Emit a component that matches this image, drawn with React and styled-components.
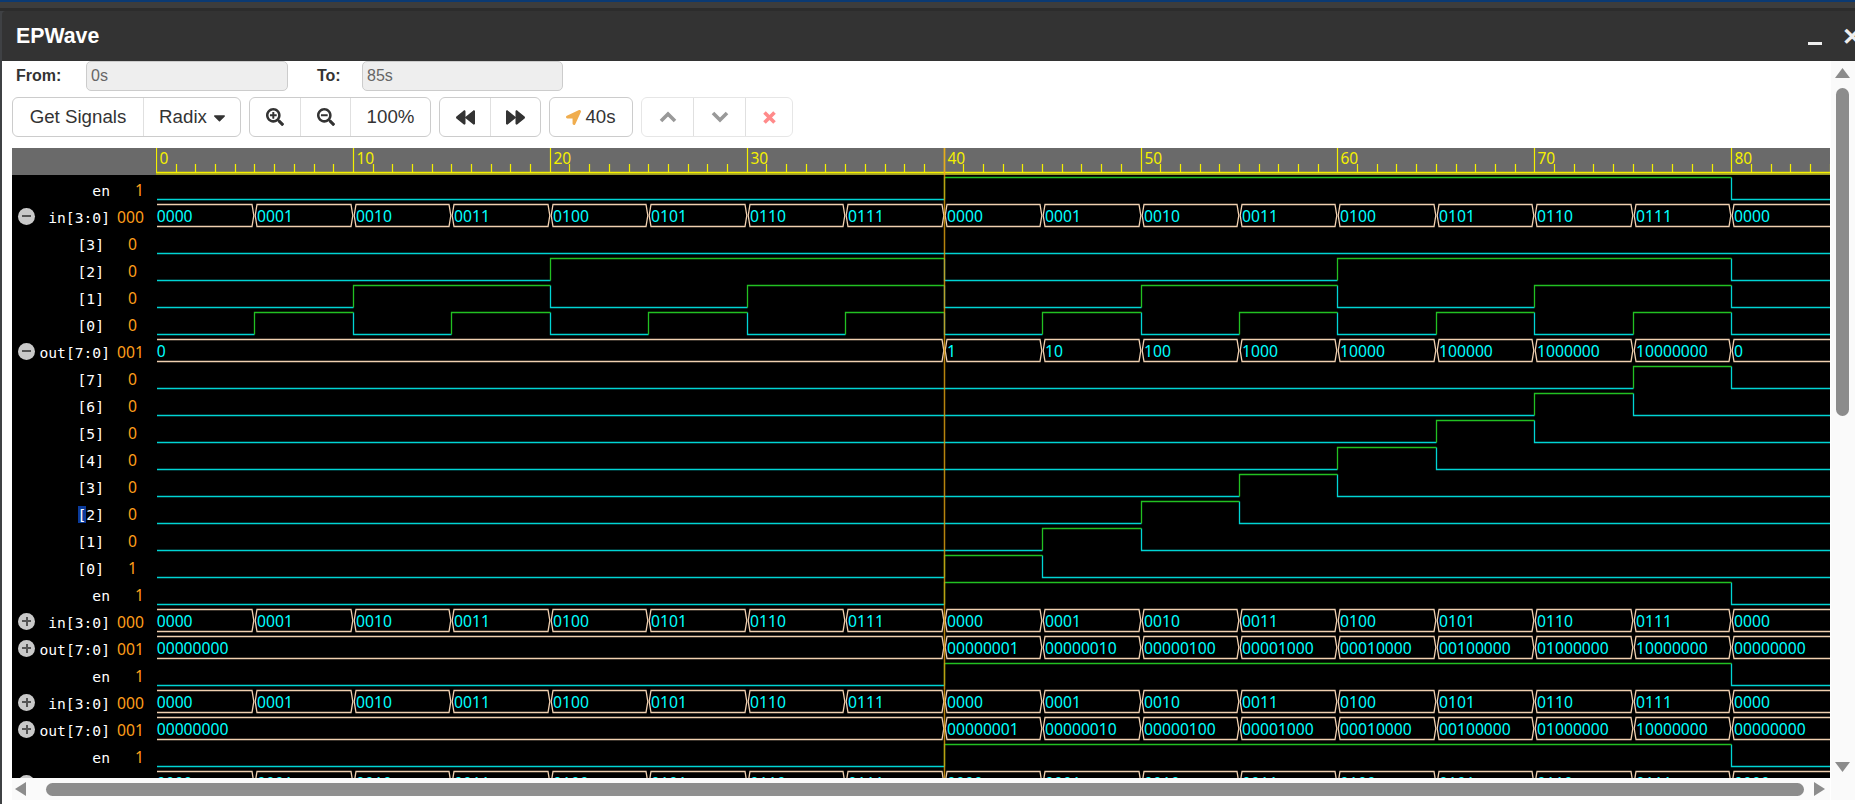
import React from 'react'
import styled, { createGlobalStyle } from 'styled-components'
import {
  FaSearchPlus, FaSearchMinus, FaBackward, FaForward, FaLocationArrow, FaCaretDown,
} from 'react-icons/fa'

const UNIT = 19.69
const ROW = 27
const X = (t) => Math.round(t * UNIT) + 0.5
const LOW = (k) => 24.5 + k * ROW

const IN_VALUES = ['0000', '0001', '0010', '0011', '0100', '0101', '0110', '0111']
const inBus = [...IN_VALUES, ...IN_VALUES, '0000']
const ONE_HOT = ['1', '10', '100', '1000', '10000', '100000', '1000000', '10000000']
const PAD_HOT = ['00000001', '00000010', '00000100', '00001000', '00010000', '00100000', '01000000', '10000000']

// bus cells: [start, end, text]
const every5 = (vals) => vals.map((v, i) => [i * 5, i === 16 ? 86 : (i + 1) * 5, v])
const after40 = (first, vals, last) => [
  [0, 40, first],
  ...vals.map((v, i) => [40 + i * 5, 45 + i * 5, v]),
  [80, 86, last],
]

const EN = [[40, 80]]
const pulse = (period, offset) => {
  const out = []
  for (let t = offset; t < 80; t += period) out.push([t, t + period / 2])
  return out
}

const signals = [
  { name: 'en', value: '1', bit: EN },
  { name: 'in[3:0]', value: '000', open: true, bus: every5(inBus) },
  { name: '[3]', value: '0', child: true, bit: [] },
  { name: '[2]', value: '0', child: true, bit: pulse(40, 20) },
  { name: '[1]', value: '0', child: true, bit: pulse(20, 10) },
  { name: '[0]', value: '0', child: true, bit: pulse(10, 5) },
  { name: 'out[7:0]', value: '001', open: true, bus: after40('0', ONE_HOT, '0') },
  ...[7, 6, 5, 4, 3, 2, 1, 0].map((b) => ({
    name: `[${b}]`,
    value: b === 0 ? '1' : '0',
    child: true,
    selected: b === 2,
    bit: [[40 + b * 5, 45 + b * 5]],
  })),
  { name: 'en', value: '1', bit: EN },
  { name: 'in[3:0]', value: '000', closed: true, bus: every5(inBus) },
  { name: 'out[7:0]', value: '001', closed: true, bus: after40('00000000', PAD_HOT, '00000000') },
  { name: 'en', value: '1', bit: EN },
  { name: 'in[3:0]', value: '000', closed: true, bus: every5(inBus) },
  { name: 'out[7:0]', value: '001', closed: true, bus: after40('00000000', PAD_HOT, '00000000') },
  { name: 'en', value: '1', bit: EN },
  { name: 'in[3:0]', value: '000', closed: true, bus: every5(inBus) },
]

const GlobalStyle = createGlobalStyle`
  html, body { margin: 0; padding: 0; background: #fff; overflow: hidden; }
  body { font-family: "Liberation Sans", Arial, sans-serif; color: #333; }
`

const Page = styled.div`
  width: 1855px;
  height: 804px;
  display: flex;
  flex-direction: column;
  overflow: hidden;
  background: #3f4144;
`
const TopStrip = styled.div`
  height: 11px;
  flex: none;
  background: linear-gradient(#0b3a73 0 2px, #3d3d3d 2px 8px, #2c2c2c 8px 11px);
`
const Dialog = styled.div`
  flex: 1;
  min-height: 0;
  margin-left: 2px;
  display: flex;
  flex-direction: column;
  border-radius: 4px 0 0 0;
  overflow: hidden;
`
const TitleBar = styled.div`
  height: 50px;
  flex: none;
  background: #333;
  display: flex;
  align-items: center;
  padding-left: 14px;
  color: #fff;
  font-size: 21.3px;
  font-weight: 700;
  position: relative;
`
const Minimize = styled.span`
  position: absolute;
  left: 1806px;
  top: 31px;
  width: 14px;
  height: 3px;
  background: #eee;
`
const Close = styled.span`
  position: absolute;
  left: 1840px;
  top: 14px;
  font-size: 24px;
  font-weight: 700;
  line-height: 24px;
  color: #eee;
`
const Body = styled.div`
  flex: 1;
  min-height: 0;
  background: #fff;
  display: flex;
`
const Main = styled.div`
  width: 1829px;
  flex: none;
  box-sizing: border-box;
  padding-left: 10px;
  display: flex;
  flex-direction: column;
`
const FromRow = styled.div`
  height: 30px;
  display: flex;
  align-items: center;
  font-size: 16px;
  font-weight: 700;
`
const FieldLabel = styled.label`
  width: ${(p) => p.$w}px;
  margin-left: ${(p) => p.$ml}px;
  flex: none;
`
const TimeInput = styled.input`
  width: ${(p) => p.$w}px;
  height: 30px;
  box-sizing: border-box;
  flex: none;
  padding: 0 0 0 4px;
  border: 1px solid #ccc;
  border-radius: 5px;
  background: #eee;
  color: #666;
  font: 16px "Liberation Sans", Arial, sans-serif;
  &:disabled { opacity: 1; -webkit-text-fill-color: #666; }
`
const Toolbar = styled.div`
  margin-top: 6px;
  height: 40px;
  display: flex;
  gap: 8px;
`
const Group = styled.div`
  display: flex;
  box-sizing: border-box;
  height: 40px;
  border: 1px solid ${(p) => (p.$disabled ? '#e6e6e6' : '#ccc')};
  border-radius: 6px;
  overflow: hidden;
`
const Btn = styled.div`
  width: ${(p) => p.$w}px;
  box-sizing: border-box;
  padding-left: ${(p) => p.$pl || 0}px;
  display: flex;
  align-items: center;
  justify-content: center;
  gap: ${(p) => p.$gap || 0}px;
  font-size: 18.7px;
  color: #333;
  & + & { border-left: 1px solid ${(p) => (p.$disabled ? '#e0e0e0' : '#ccc')}; }
`
const Viewer = styled.div`
  margin-top: 11px;
  width: 1818px;
  display: flex;
  flex-direction: column;
`
const RulerBar = styled.div`
  height: 27px;
  flex: none;
  background: #6a6a6a;
  padding-left: 144px;
`
const Plot = styled.svg`
  display: block;
  overflow: hidden;
`
const RulerText = styled.text`
  fill: #f4f000;
  font: 15.5px "Noto Sans", sans-serif;
`
const Traces = styled.div`
  height: 603px;
  flex: none;
  background: #000;
  display: grid;
  grid-template-columns: 144px 1674px;
  overflow: hidden;
`
const Names = styled.div`
  padding-top: 2px;
`
const NameRow = styled.div`
  height: ${ROW}px;
  box-sizing: border-box;
  padding: 0 12px 0 6px;
  display: grid;
  grid-template-columns: 17px 1fr 34px;
  align-items: center;
`
const Name = styled.span`
  text-align: right;
  color: #fff;
  font: 14.67px "DejaVu Sans Mono", monospace;
  padding-right: ${(p) => (p.$child ? 6 : 0)}px;
  white-space: pre;
`
const Selected = styled.span`
  background: #0a3a9a;
`
const NameValue = styled.span`
  text-align: right;
  color: #ff9e1a;
  font: 15.7px "Noto Sans", sans-serif;
  margin-bottom: 2px;
  padding-right: ${(p) => (p.$child ? 7 : 0)}px;
`
const Toggle = styled.span`
  width: 17px;
  height: 17px;
  margin-top: -3px;
  border-radius: 50%;
  background: #c9c9c9;
  position: relative;
  &::before {
    content: '';
    position: absolute;
    left: 4px;
    top: 7.5px;
    width: 9px;
    height: 2px;
    background: #555;
  }
  &::after {
    content: '';
    display: ${(p) => (p.$plus ? 'block' : 'none')};
    position: absolute;
    left: 7.5px;
    top: 4px;
    width: 2px;
    height: 9px;
    background: #555;
  }
`
const BusText = styled.text`
  fill: #00ffff;
  font: 15.7px "Noto Sans", sans-serif;
`
const HScroll = styled.div`
  height: 22px;
  flex: none;
  box-sizing: border-box;
  background: #fafafa;
  padding: 0 5px 0 3px;
  display: flex;
  align-items: center;
`
const HThumb = styled.div`
  flex: 1;
  height: 13px;
  margin: 0 10px 0 20px;
  border-radius: 7px;
  background: #8c8c8c;
`
const Arrow = styled.span`
  flex: none;
  display: block;
  background: #8c8c8c;
  width: ${(p) => (p.$dir === 'left' || p.$dir === 'right' ? 11 : 15)}px;
  height: ${(p) => (p.$dir === 'left' || p.$dir === 'right' ? 14 : 10)}px;
  clip-path: ${(p) => ({
    up: 'polygon(50% 0, 100% 100%, 0 100%)',
    down: 'polygon(0 0, 100% 0, 50% 100%)',
    left: 'polygon(100% 0, 100% 100%, 0 50%)',
    right: 'polygon(0 0, 100% 50%, 0 100%)',
  }[p.$dir])};
`
const VScroll = styled.div`
  flex: 1;
  background: #fafafa;
  height: 739px;
  box-sizing: border-box;
  padding: 7px 0 28px 4px;
  display: flex;
  flex-direction: column;
`
const VThumb = styled.div`
  width: 13px;
  height: 328px;
  margin: 10px 0 0 1px;
  border-radius: 7px;
  background: #8c8c8c;
`
const VDown = styled(Arrow)`
  margin-top: auto;
`

// the glyphicon chevrons and cross are heavier than the packaged ones
const Chevron = ({ up }) => (
  <svg width="18" height="12" viewBox="0 0 18 12">
    <polyline points={up ? '2,10 9,3 16,10' : '2,2 9,9 16,2'} fill="none" stroke="#999" strokeWidth="3.6" />
  </svg>
)
const Cross = () => (
  <svg width="13" height="13" viewBox="0 0 13 13">
    <path d="M1.5 1.5 L11.5 11.5 M11.5 1.5 L1.5 11.5" fill="none" stroke="#ff8a8a" strokeWidth="3.6" />
  </svg>
)

const Ruler = () => {
  const ticks = []
  for (let t = 0; t <= 85; t++) {
    const major = t % 10 === 0
    ticks.push(<line key={t} x1={X(t)} x2={X(t)} y1={major ? 0 : 16} y2={24} stroke="#f4f000" strokeWidth="1.2" />)
    if (major) ticks.push(<RulerText key={`l${t}`} x={X(t) + 3} y={16}>{t}</RulerText>)
  }
  return (
    <Plot width="1674" height="27">
      <rect x="0" y="24.5" width="1674" height="2.5" fill="#9c9a2a" />
      <line x1="0" x2="1674" y1="24.5" y2="24.5" stroke="#f4f000" strokeWidth="1.5" />
      {ticks}
      <line x1={X(40)} x2={X(40)} y1="0" y2="27" stroke="#e8ac1c" strokeWidth="1.5" />
    </Plot>
  )
}

const BitTrace = ({ k, bit }) => {
  const low = LOW(k)
  const high = low - 22
  let cyan = `M1 ${low}`
  let green = ''
  bit.forEach(([a, b]) => {
    cyan += ` L${X(a)} ${low}`
    green += ` M${X(a)} ${low} L${X(a)} ${high} L${X(b)} ${high}`
    cyan += ` M${X(b)} ${high} L${X(b)} ${low}`
  })
  cyan += ' L1680 ' + low
  return (
    <g fill="none" strokeWidth="1.3">
      <path d={cyan} stroke="#00d4d4" />
      {green && <path d={green} stroke="#22c022" />}
    </g>
  )
}

const BusTrace = ({ k, cells }) => {
  const bot = LOW(k)
  const top = bot - 22
  const mid = bot - 11
  return (
    <g>
      {cells.map(([a, b, text], i) => {
        const x0 = X(a)
        const x1 = X(b)
        const d = i === 0
          ? `M1 ${top} L${x1 - 2.5} ${top} L${x1 - 0.7} ${mid} L${x1 - 2.5} ${bot} L1 ${bot}`
          : `M${x0 + 0.7} ${mid} L${x0 + 2.5} ${top} L${x1 - 2.5} ${top} L${x1 - 0.7} ${mid} L${x1 - 2.5} ${bot} L${x0 + 2.5} ${bot} Z`
        return (
          <g key={a}>
            <path d={d} fill="none" stroke="#f0d0b0" strokeWidth="1.3" />
            <BusText x={i === 0 ? 0.7 : x0 + 2.5} y={bot - 5}>{text}</BusText>
          </g>
        )
      })}
    </g>
  )
}

const Waves = () => (
  <Plot width="1674" height="603">
    {signals.map((s, k) => (s.bus
      ? <BusTrace key={k} k={k} cells={s.bus} />
      : <BitTrace key={k} k={k} bit={s.bit} />))}
    <line x1={X(40)} x2={X(40)} y1="0" y2="603" stroke="#d89a10" strokeWidth="1.5" opacity="0.85" />
  </Plot>
)

const SignalName = ({ s }) => {
  if (s.selected) {
    return <Name $child><Selected>[</Selected>{s.name.slice(1)}</Name>
  }
  return <Name $child={s.child}>{s.name}</Name>
}

export default function App() {
  return (
    <Page>
      <GlobalStyle />
      <TopStrip />
      <Dialog>
        <TitleBar>
          EPWave
          <Minimize />
          <Close>✕</Close>
        </TitleBar>
        <Body>
          <Main>
            <FromRow>
              <FieldLabel $w={70} $ml={4}>From:</FieldLabel>
              <TimeInput $w={202} value="0s" disabled readOnly />
              <FieldLabel $w={45} $ml={29}>To:</FieldLabel>
              <TimeInput $w={201} value="85s" disabled readOnly />
            </FromRow>
            <Toolbar>
              <Group>
                <Btn $w={130}>Get Signals</Btn>
                <Btn $w={97} $gap={3} $pl={4}>Radix <FaCaretDown size={19} /></Btn>
              </Group>
              <Group>
                <Btn $w={50}><FaSearchPlus size={18} /></Btn>
                <Btn $w={50}><FaSearchMinus size={18} /></Btn>
                <Btn $w={80}>100%</Btn>
              </Group>
              <Group>
                <Btn $w={50}><FaBackward size={19} /></Btn>
                <Btn $w={50}><FaForward size={19} /></Btn>
              </Group>
              <Group>
                <Btn $w={82} $gap={4}><FaLocationArrow size={15} color="#f0ad4e" />40s</Btn>
              </Group>
              <Group $disabled>
                <Btn $w={51} $disabled><Chevron up /></Btn>
                <Btn $w={52} $disabled><Chevron /></Btn>
                <Btn $w={47} $disabled><Cross /></Btn>
              </Group>
            </Toolbar>
            <Viewer>
              <RulerBar><Ruler /></RulerBar>
              <Traces>
                <Names>
                  {signals.map((s, k) => (
                    <NameRow key={k}>
                      {s.open ? <Toggle /> : s.closed ? <Toggle $plus /> : <span />}
                      <SignalName s={s} />
                      <NameValue $child={s.child}>{s.value}</NameValue>
                    </NameRow>
                  ))}
                </Names>
                <Waves />
              </Traces>
              <HScroll>
                <Arrow $dir="left" />
                <HThumb />
                <Arrow $dir="right" />
              </HScroll>
            </Viewer>
          </Main>
          <VScroll>
            <Arrow $dir="up" />
            <VThumb />
            <VDown $dir="down" />
          </VScroll>
        </Body>
      </Dialog>
    </Page>
  )
}
